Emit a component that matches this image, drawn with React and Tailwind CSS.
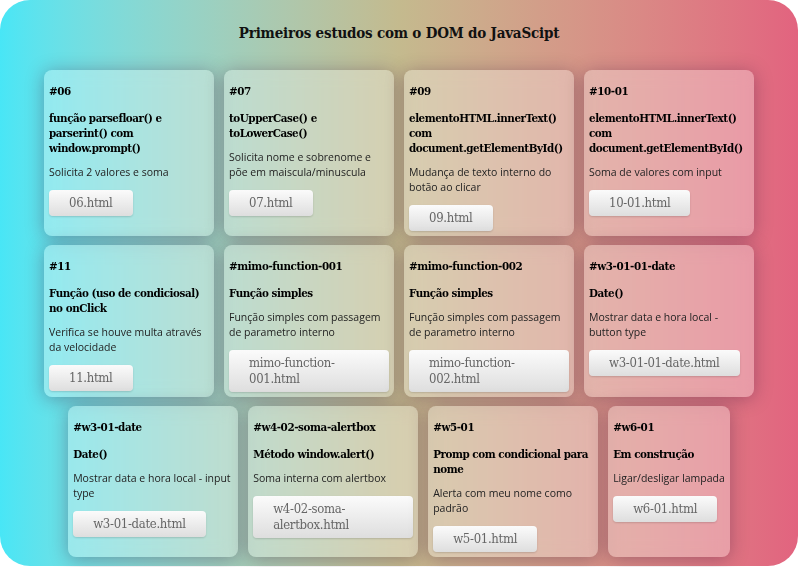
import React from "react";

const projects = [
  { id: "#06", title: "função parsefloar() e parserint() com window.prompt()", desc: "Solicita 2 valores e soma", file: "06.html" },
  { id: "#07", title: "toUpperCase() e toLowerCase()", desc: "Solicita nome e sobrenome e põe em maiscula/minuscula", file: "07.html" },
  { id: "#09", title: "elementoHTML.innerText() com document.getElementById()", desc: "Mudança de texto interno do botão ao clicar", file: "09.html" },
  { id: "#10-01", title: "elementoHTML.innerText() com document.getElementById()", desc: "Soma de valores com input", file: "10-01.html" },
  { id: "#11", title: "Função (uso de condiciosal) no onClick", desc: "Verifica se houve multa através da velocidade", file: "11.html" },
  { id: "#mimo-function-001", title: "Função simples", desc: "Função simples com passagem de parametro interno", file: "mimo-function-001.html" },
  { id: "#mimo-function-002", title: "Função simples", desc: "Função simples com passagem de parametro interno", file: "mimo-function-002.html" },
  { id: "#w3-01-01-date", title: "Date()", desc: "Mostrar data e hora local - button type", file: "w3-01-01-date.html" },
  { id: "#w3-01-date", title: "Date()", desc: "Mostrar data e hora local - input type", file: "w3-01-date.html" },
  { id: "#w4-02-soma-alertbox", title: "Método window.alert()", desc: "Soma interna com alertbox", file: "w4-02-soma-alertbox.html" },
  { id: "#w5-01", title: "Promp com condicional para nome", desc: "Alerta com meu nome como padrão", file: "w5-01.html" },
  { id: "#w6-01", title: "Em construção", desc: "Ligar/desligar lampada", file: "w6-01.html" },
];

// slab-ish serif, condensed cut when it is there
const slab = "font-['DejaVu_Serif_Condensed','DejaVu_Serif',serif]";

function Card({ item }) {
  return (
    <div className="flex flex-col max-w-[170px] rounded-[8px] bg-white/30 backdrop-blur-sm shadow-[0_2px_18px_rgba(60,20,60,0.35)] px-[5px] pt-[14px] pb-[5px]">
      <h4 className={`${slab} font-bold text-[11.5px] leading-[15px] tracking-[-0.4px] text-black mb-[12px]`}>{item.id}</h4>
      <h3 className={`${slab} font-bold text-[11.5px] leading-[15px] tracking-[-0.45px] text-black mb-[9px]`}>{item.title}</h3>
      <p className="font-['Open_Sans',sans-serif] text-[10.5px] leading-[15px] text-[#222] mb-[10px]">{item.desc}</p>
      <button className={`${slab} self-start text-left text-[13px] leading-[16px] tracking-[-0.3px] text-[#666] px-[20px] py-[5px] rounded-[4px] bg-linear-to-b from-[#fbfbfb] to-[#dedede] shadow-[0_1px_2px_rgba(0,0,0,0.15)]`}>
        {item.file}
      </button>
    </div>
  );
}

export default function App() {
  return (
    <div className="w-[800px] h-[567px] bg-white">
      <div className="w-[798px] h-[566px] rounded-[30px] bg-linear-to-r from-[#48e6f6] via-[#c4ba8e] to-[#e2637f] flex flex-col items-center">
        <h1 className={`${slab} font-bold text-[15px] leading-[20px] tracking-[-0.2px] text-[#111] mt-[23px]`}>
          Primeiros estudos com o DOM do JavaScipt
        </h1>
        <div className="w-full px-[40px] mt-[27px] flex flex-wrap justify-center gap-x-[10px] gap-y-[9px]">
          {projects.map((p) => (
            <Card key={p.id} item={p} />
          ))}
        </div>
      </div>
    </div>
  );
}
